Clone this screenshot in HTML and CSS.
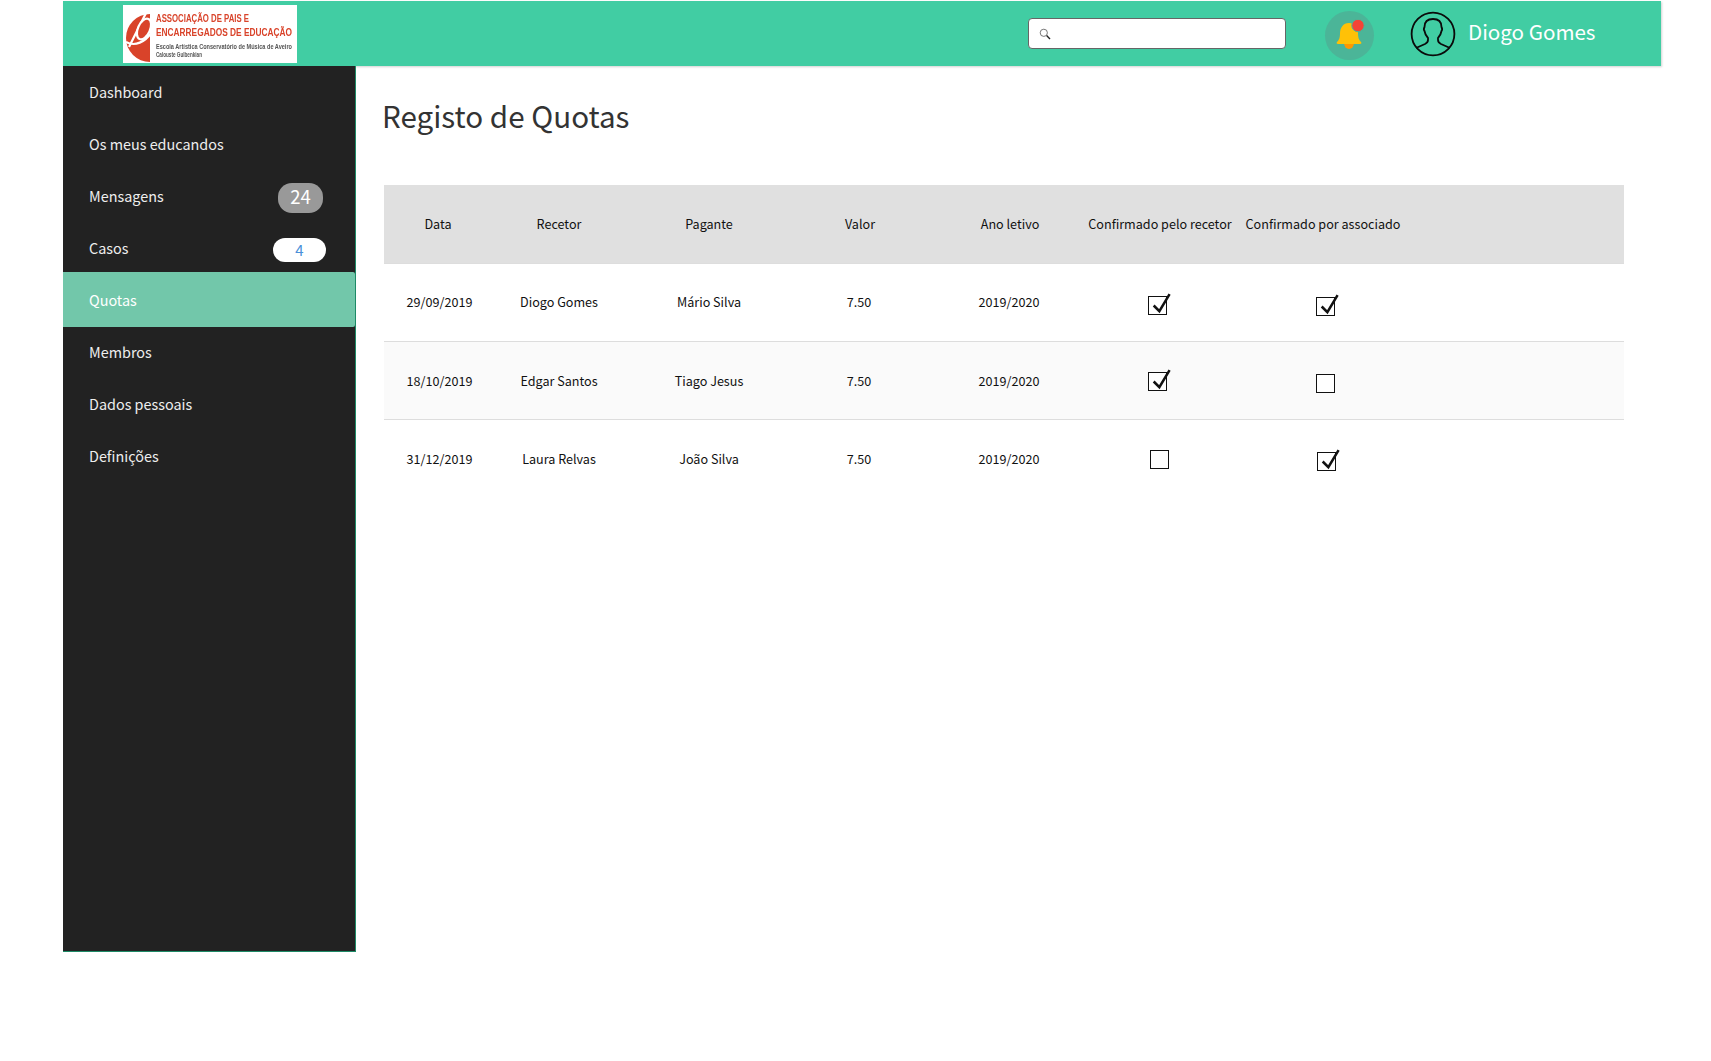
FILE: index.html
```html
<!DOCTYPE html>
<html lang="pt">
<head>
<meta charset="utf-8">
<title>Registo de Quotas</title>
<link rel="stylesheet" href="styles.css">
</head>
<body>
<div class="app">
  <header class="topbar">
    <div class="logo">
      <svg class="logo-mark" width="32" height="58" viewBox="0 0 32 58">
        <path class="logo-red" d="M27 9A24 24 0 0 0 27 57Z"/>
        <path class="logo-cut" d="M23 8L6 42"/>
        <ellipse class="logo-bowl" cx="21" cy="24" rx="6" ry="11" transform="rotate(24 21 24)"/>
        <path class="logo-cut" d="M3 37C12 42 22 37 29 27"/>
      </svg>
      <svg class="logo-words" width="142" height="58" viewBox="0 0 284 58" preserveAspectRatio="none">
        <text class="logo-title" x="2" y="17" textLength="186" lengthAdjust="spacingAndGlyphs">ASSOCIAÇÃO DE PAIS E</text>
        <text class="logo-title" x="2" y="31.500" textLength="272" lengthAdjust="spacingAndGlyphs">ENCARREGADOS DE EDUCAÇÃO</text>
        <text class="logo-sub" x="2" y="44" textLength="272" lengthAdjust="spacingAndGlyphs">Escola Artística Conservatório de Música de Aveiro</text>
        <text class="logo-sub" x="2" y="52" textLength="92" lengthAdjust="spacingAndGlyphs">Calouste Gulbenkian</text>
      </svg>
    </div>
    <div class="search">
      <svg class="search-icon" width="12" height="12" viewBox="0 0 12 12">
        <circle cx="4.800" cy="4.800" r="3.600"/>
        <path class="search-handle" d="M7.600 7.600L11 11"/>
      </svg>
    </div>
    <div class="bell">
      <svg width="49" height="49" viewBox="0 0 49 49">
        <path class="bell-clapper" d="M19 32h10a5 6 0 0 1-10 0z"/>
        <path class="bell-body" d="M24 12c-6 0-9 5-9 10 0 5-1 7-3 9-1 1 0 2 1 2h22c1 0 2-1 1-2-2-2-3-4-3-9 0-5-3-10-9-10z"/>
        <circle class="bell-dot" cx="33" cy="14.500" r="6.200"/>
      </svg>
    </div>
    <div class="user">
      <svg class="avatar" width="46" height="46" viewBox="0 0 46 46">
        <circle cx="23" cy="23" r="21.400"/>
        <path d="M6 37l9-4c2-1 3-2 3-4v-2c-2-2-3-4-3.500-7-1-1-.5-3 0-4 0-5 3-8 8.500-8s8.500 3 8.500 8c.5 1 1 3 0 4-.5 3-1.500 5-3.500 7v2c0 2 1 3 3 4l9 4"/>
      </svg>
      <span class="user-name">Diogo Gomes</span>
    </div>
  </header>

  <div class="body-row">
    <nav class="sidebar">
      <a class="nav-item">Dashboard</a>
      <a class="nav-item">Os meus educandos</a>
      <a class="nav-item">Mensagens<span class="badge badge-grey">24</span></a>
      <a class="nav-item">Casos<span class="badge badge-white">4</span></a>
      <a class="nav-item nav-active">Quotas</a>
      <a class="nav-item">Membros</a>
      <a class="nav-item">Dados pessoais</a>
      <a class="nav-item">Definições</a>
    </nav>

    <main class="content">
      <h1 class="title">Registo de Quotas</h1>
      <table class="quotas">
        <colgroup>
          <col class="c-data"><col class="c-recetor"><col class="c-pagante"><col class="c-valor"><col class="c-ano"><col class="c-conf1"><col class="c-conf2"><col>
        </colgroup>
        <thead>
          <tr>
            <th class="head-left">Data</th><th>Recetor</th><th>Pagante</th><th class="head-right">Valor</th><th class="head-right">Ano letivo</th><th>Confirmado pelo recetor</th><th>Confirmado por associado</th><th></th>
          </tr>
        </thead>
        <tbody>
          <tr class="row-first">
            <td class="cell-date">29/09/2019</td><td>Diogo Gomes</td><td>Mário Silva</td><td>7.50</td><td>2019/2020</td>
            <td><span class="check on nudge-a"><svg viewBox="0 0 22 22"><path d="M5 11l5 5 9-15"/></svg></span></td>
            <td><span class="check on nudge-b"><svg viewBox="0 0 22 22"><path d="M5 11l5 5 9-15"/></svg></span></td>
            <td></td>
          </tr>
          <tr class="row-alt">
            <td class="cell-date">18/10/2019</td><td>Edgar Santos</td><td>Tiago Jesus</td><td>7.50</td><td>2019/2020</td>
            <td><span class="check on nudge-c"><svg viewBox="0 0 22 22"><path d="M5 11l5 5 9-15"/></svg></span></td>
            <td><span class="check nudge-d"></span></td>
            <td></td>
          </tr>
          <tr>
            <td class="cell-date">31/12/2019</td><td>Laura Relvas</td><td>João Silva</td><td>7.50</td><td>2019/2020</td>
            <td><span class="check nudge-e"></span></td>
            <td><span class="check on nudge-f"><svg viewBox="0 0 22 22"><path d="M5 11l5 5 9-15"/></svg></span></td>
            <td></td>
          </tr>
        </tbody>
      </table>
    </main>
  </div>
</div>
</body>
</html>
```

FILE: styles.css
```css
* { box-sizing: border-box; }

html, body { margin: 0; background: #fff; }

body {
  font-family: "Noto Sans CJK JP", "Noto Sans", sans-serif;
  color: #111;
  padding-top: 1px;
}

.app {
  width: 1598px;
  margin-left: 63px;
}

/* top bar */
.topbar {
  display: flex;
  align-items: center;
  height: 65px;
  background: #41cda3;
  box-shadow: 1px 1px 2px rgba(0, 0, 0, .18);
}

.logo {
  display: flex;
  width: 174px;
  height: 58px;
  margin-left: 60px;
  background: #fff;
  flex: none;
}
.logo svg { display: block; flex: none; filter: blur(.3px); }
.logo-red { fill: #d9432a; }
.logo-cut { fill: none; stroke: #fff; stroke-width: 2.2; }
.logo-bowl { fill: #d9432a; stroke: #fff; stroke-width: 2.2; }
.logo-title {
  font-family: "Liberation Sans", sans-serif;
  font-size: 11.800px;
  font-weight: 700;
  fill: #d9432a;
}
.logo-sub {
  font-family: "Liberation Sans", sans-serif;
  font-size: 7px;
  font-weight: 700;
  fill: #555;
}

.search {
  display: flex;
  align-items: center;
  width: 258px;
  height: 31px;
  margin-left: 731px;
  padding-left: 10px;
  background: #fff;
  border: 1px solid #666;
  border-radius: 4px;
  flex: none;
}
.search-icon { fill: none; stroke: #777; stroke-width: 1; }
.search-handle { stroke: #222; stroke-width: 1.4; }

.bell {
  width: 49px;
  height: 49px;
  margin: 3px 0 0 39px;
  border-radius: 50%;
  background: #4bb598;
  flex: none;
}
.bell svg { display: block; }
.bell-body { fill: #ffc107; }
.bell-clapper { fill: #ff9800; }
.bell-dot { fill: #f44336; stroke: #4bb598; stroke-width: 1; }

.user {
  display: flex;
  align-items: center;
  margin-left: 36px;
}
.avatar { fill: none; stroke: #0a0a0a; stroke-width: 1.8; flex: none; }
.user-name {
  margin: 0 0 4px 12px;
  font-size: 20.6px;
  color: #fff;
  line-height: 1;
}

/* layout */
.body-row { display: flex; align-items: stretch; }

/* sidebar */
.sidebar {
  display: flex;
  flex-direction: column;
  width: 293px;
  height: 886px;
  background: #222;
  border-right: 1px solid #1d8a66;
  border-bottom: 1px solid #1d8a66;
  flex: none;
}
.nav-item {
  display: flex;
  align-items: center;
  justify-content: space-between;
  height: 52px;
  padding: 0 0 2px 26px;
  font-size: 14.4px;
  color: #eee;
  flex: none;
}
.nav-active {
  height: 55px;
  margin: -2px 0 -1px;
  padding-bottom: 0;
  background: #72c7aa;
  border-radius: 0 2px 2px 0;
  color: #fff;
}

.badge {
  display: flex;
  align-items: center;
  justify-content: center;
  border-radius: 14px;
}
.badge-grey {
  width: 45px;
  height: 30px;
  margin: 6px 32px 0 0;
  padding-bottom: 5px;
  background: #999;
  color: #fff;
  font-size: 18.5px;
}
.badge-white {
  width: 53px;
  height: 24px;
  margin: 6px 29px 0 0;
  padding-bottom: 2px;
  background: #fff;
  color: #4a90d9;
  font-size: 15px;
}

/* content */
.content {
  flex: 1;
  padding: 0 36px 0 28px;
}
.title {
  margin: 24px 0 0 -2px;
  font-size: 29.6px;
  font-weight: 400;
  line-height: 52px;
  color: #333;
}

.quotas {
  width: 1240px;
  margin-top: 43px;
  border-collapse: collapse;
  table-layout: fixed;
  font-size: 12.6px;
}
.c-data { width: 102px; }
.c-recetor { width: 146px; }
.c-pagante { width: 154px; }
.c-valor { width: 146px; }
.c-ano { width: 154px; }
.c-conf1 { width: 148px; }
.c-conf2 { width: 178px; }

.quotas th, .quotas td {
  height: 78px;
  padding: 0;
  text-align: center;
  white-space: nowrap;
  vertical-align: middle;
}
.quotas th { font-weight: 400; background: #e0e0e0; border-bottom: 1px solid #ddd; }
.quotas td { border-bottom: 1px solid #ddd; }
.quotas tbody tr:last-child td { border-bottom: 0; }
.row-first td { padding-bottom: 2px; }
.row-alt td { background: #fafafa; }
.quotas .head-left { padding-left: 6px; }
.quotas .head-right { padding-left: 2px; }
.quotas .cell-date { padding-left: 9px; }

.check {
  display: inline-block;
  width: 19px;
  height: 19px;
  border: 1.4px solid #111;
  background: #fff;
  vertical-align: middle;
  position: relative;
}
.check svg {
  position: absolute;
  left: -1px;
  top: -4px;
  width: 25px;
  height: 25px;
  fill: none;
  stroke: #111;
  stroke-width: 2.2;
}
.nudge-a { margin: 8px 5px 0 0; }
.nudge-b { margin: 10px 0 0 5px; }
.nudge-c { margin: 0 5px 0 0; }
.nudge-d { margin: 6px 0 0 5px; }
.nudge-e { margin: 0 1px 0 0; }
.nudge-f { margin: 6px 0 0 7px; }
```
